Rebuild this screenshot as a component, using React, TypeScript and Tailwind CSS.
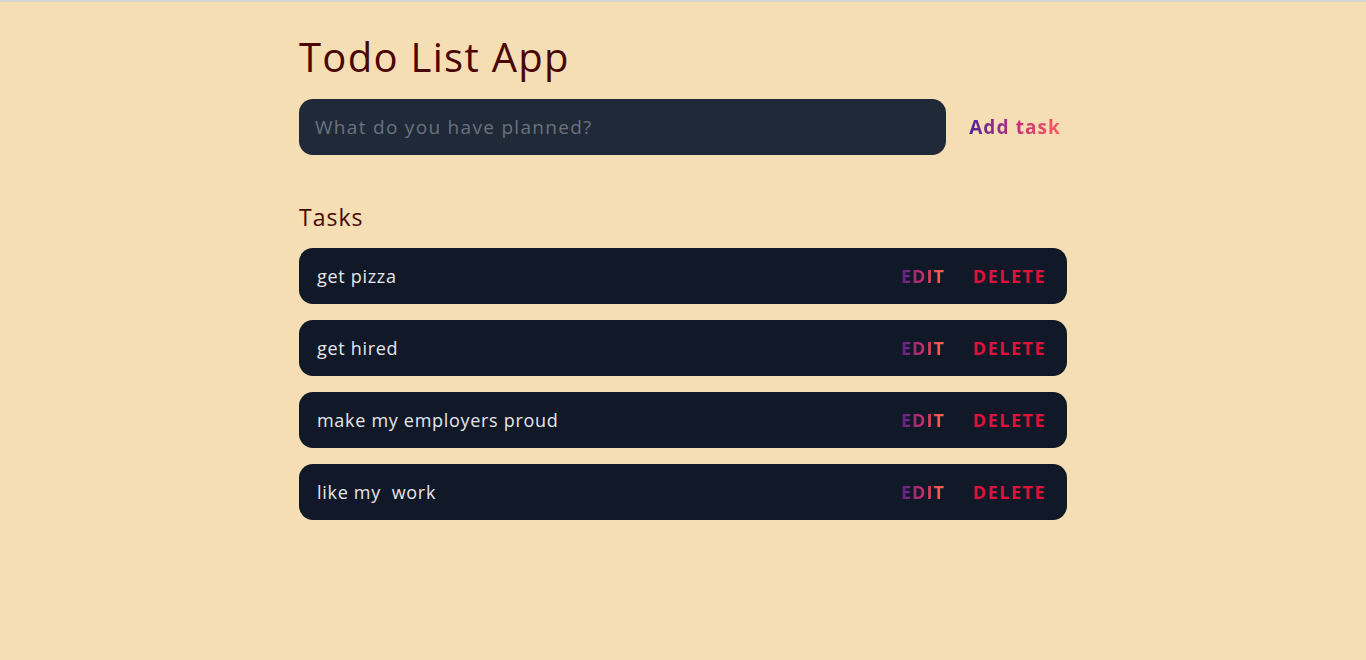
import { useState } from 'react'

interface Task {
  id: number
  text: string
}

const initialTasks: Task[] = [
  { id: 1, text: 'get pizza' },
  { id: 2, text: 'get hired' },
  { id: 3, text: 'make my employers proud' },
  { id: 4, text: 'like my  work' },
]

export default function App() {
  const [tasks, setTasks] = useState<Task[]>(initialTasks)
  const [draft, setDraft] = useState('')

  const addTask = () => {
    if (!draft.trim()) return
    setTasks((prev) => [...prev, { id: Date.now(), text: draft }])
    setDraft('')
  }

  return (
    <div className="min-h-[660px] bg-[#f5deb3] border-t-2 border-[#d4d4d4] font-['Open_Sans',sans-serif]">
      <main className="max-w-3xl mx-auto pt-[30px]">
        <h1 className="text-[40px] leading-[50px] tracking-[1.3px] text-[#4a0505]">Todo List App</h1>

        <div className="mt-[17px] flex items-center">
          <input
            value={draft}
            onChange={(e) => setDraft(e.target.value)}
            placeholder="What do you have planned?"
            className="w-[647px] h-14 rounded-[14px] bg-[#1f2937] px-4 text-[19px] tracking-[1.3px] text-gray-200 placeholder:text-[#6b7280] outline-none"
          />
          <button
            onClick={addTask}
            className="ml-auto mr-[6px] text-[19px] font-bold tracking-[1.1px] bg-gradient-to-r from-[#4c1d95] via-[#c0267a] to-[#ff5a5f] bg-clip-text text-transparent"
          >
            Add task
          </button>
        </div>

        <h2 className="mt-[46px] text-[23px] leading-[32px] tracking-[1px] text-[#4a0505]">Tasks</h2>

        <div className="mt-[15px] flex flex-col gap-4">
          {tasks.map((t) => (
            <div key={t.id} className="h-14 rounded-[14px] bg-[#111827] flex items-center pl-[18px] pr-[21px]">
              <span className="text-[18px] tracking-[0.7px] text-[#e5e7eb] whitespace-pre">{t.text}</span>
              <div className="ml-auto flex items-center gap-[28px]">
                <button className="text-[18px] font-bold uppercase tracking-[1px] bg-gradient-to-r from-[#5b1b8f] via-[#d1246b] to-[#ff6a3d] bg-clip-text text-transparent">
                  Edit
                </button>
                <button
                  onClick={() => setTasks((prev) => prev.filter((x) => x.id !== t.id))}
                  className="text-[18px] font-bold uppercase tracking-[1.5px] text-[#dc143c]"
                >
                  Delete
                </button>
              </div>
            </div>
          ))}
        </div>
      </main>
    </div>
  )
}
